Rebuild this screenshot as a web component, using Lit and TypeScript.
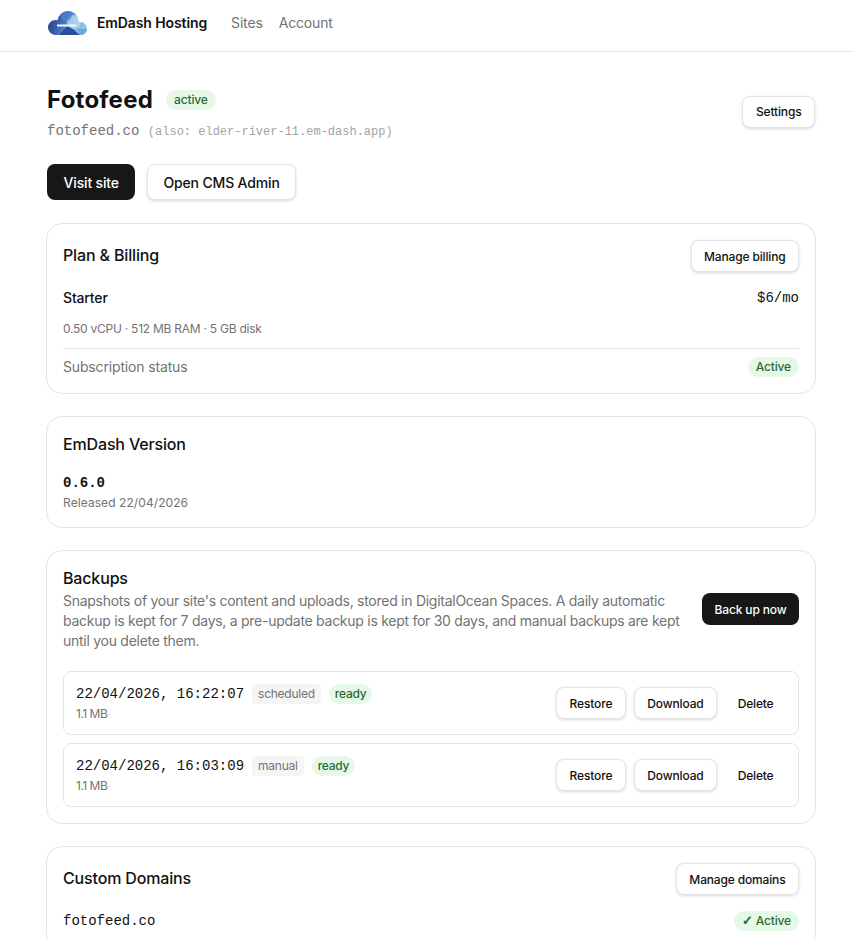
import { LitElement, html, css } from 'lit';
import { customElement } from 'lit/decorators.js';

const backups = [
    { date: '22/04/2026, 16:22:07', kind: 'scheduled' },
    { date: '22/04/2026, 16:03:09', kind: 'manual' },
];

@customElement('app-root')
export class AppRoot extends LitElement {
    static styles = css`
        :host {
            display: block;
            height: 939px;
            overflow: hidden;
            background: #fff;
            color: #111;
            font-family: Inter, 'Liberation Sans', sans-serif;
            font-size: 14px;
            letter-spacing: -0.011em;
        }

        * {
            box-sizing: border-box;
        }

        .mono {
            font-family: 'Liberation Mono', monospace;
            letter-spacing: 0;
        }

        header {
            display: flex;
            align-items: center;
            height: 52px;
            padding: 0 46px 6px 48px;
            border-bottom: 1px solid #e5e5e5;
        }

        .logo {
            width: 40px;
            height: 26px;
            margin-right: 9px;
        }

        .brand {
            font-size: 14px;
            font-weight: 600;
            letter-spacing: -0.008em;
            margin-right: 24px;
        }

        nav {
            display: flex;
            gap: 16px;
            color: #737373;
        }

        main {
            display: flex;
            flex-direction: column;
            width: 770px;
            margin-left: 46px;
            padding-top: 33px;
        }

        .top {
            display: flex;
            justify-content: space-between;
            align-items: center;
            padding: 0 1px;
        }

        .top > button {
            margin-bottom: 2px;
        }

        .title-row {
            display: flex;
            align-items: center;
            gap: 13px;
        }

        h1 {
            margin: 0;
            font-size: 24px;
            line-height: 30px;
            font-weight: 700;
            letter-spacing: 0.01em;
        }

        .domain {
            margin-top: 8px;
            font-size: 14px;
            line-height: 16px;
            color: #737373;
        }

        .domain span {
            font-size: 12px;
            color: #a3a3a3;
        }

        .actions {
            display: flex;
            gap: 12px;
            margin-top: 24px;
            margin-bottom: 23px;
            padding: 0 1px;
        }

        button {
            font: inherit;
            font-size: 12px;
            font-weight: 500;
            letter-spacing: inherit;
            color: #111;
            height: 32px;
            padding: 0 12.5px;
            border: 1px solid #e5e5e5;
            border-radius: 8px;
            background: #fff;
            box-shadow: 0 1px 3px rgba(0, 0, 0, 0.15);
            white-space: nowrap;
        }

        button.dark {
            color: #fff;
            background: #171717;
            border: none;
            box-shadow: none;
        }

        button.big {
            font-size: 14px;
            height: 36px;
            padding: 0 15px;
        }

        button.big.dark {
            padding: 0 16.5px;
        }

        button.ghost {
            border-color: transparent;
            background: transparent;
            box-shadow: none;
            padding: 0 11.5px;
        }

        .card {
            border: 1px solid #e5e5e5;
            border-radius: 16px;
            padding: 16px;
            margin-bottom: 22px;
        }

        .row {
            display: flex;
            justify-content: space-between;
            align-items: center;
        }

        h2 {
            margin: 0;
            font-size: 16px;
            line-height: 22px;
            font-weight: 500;
        }

        .row > h2 {
            margin-bottom: 2px;
        }

        .badge {
            display: inline-block;
            padding: 0 8px;
            height: 20px;
            line-height: 20px;
            border-radius: 10px;
            font-size: 12px;
            font-weight: 500;
            color: #2a6a37;
            background: #e6f9e8;
            white-space: nowrap;
        }

        .badge.compact {
            padding: 0 6px;
            letter-spacing: -0.02em;
        }

        .check {
            font-family: 'DejaVu Sans', sans-serif;
            font-size: 13px;
            line-height: 1;
            font-weight: 700;
            -webkit-text-stroke: 0.6px #2a6a37;
        }

        .tag {
            display: inline-block;
            padding: 0 6px;
            height: 20px;
            line-height: 20px;
            border-radius: 4px;
            font-size: 12px;
            letter-spacing: -0.02em;
            color: #737373;
            background: #f5f5f5;
        }

        .plan {
            margin-top: 15px;
            line-height: 22px;
            font-weight: 500;
        }

        .plan .mono {
            font-weight: 400;
        }

        .small {
            font-size: 12px;
            line-height: 16px;
            color: #737373;
        }

        .specs {
            margin-top: 12px;
            letter-spacing: -0.25px;
        }

        .status {
            margin-top: 11px;
            padding-top: 8px;
            border-top: 1px solid #e5e5e5;
            color: #737373;
            line-height: 20px;
        }

        .version {
            margin-top: 18px;
            font-size: 14px;
            line-height: 20px;
            font-weight: 700;
        }

        .released {
            margin-top: 2px;
            letter-spacing: 0.08px;
        }

        .desc {
            margin-top: 2px;
            font-size: 14px;
            line-height: 20px;
            letter-spacing: -0.27px;
            color: #737373;
            width: 623px;
        }

        .list {
            display: flex;
            flex-direction: column;
            gap: 8px;
            margin-top: 20px;
        }

        .backup {
            display: flex;
            justify-content: space-between;
            align-items: center;
            height: 64px;
            padding: 0 12px;
            border: 1px solid #e5e5e5;
            border-radius: 8px;
        }

        .backup-head {
            display: flex;
            align-items: center;
            gap: 8px;
            margin-bottom: 2px;
        }

        .size {
            letter-spacing: -0.5px;
        }

        .btns {
            display: flex;
            gap: 8px;
        }
    `;

    render() {
        return html`
            <header>
                <svg class="logo" viewBox="0 0 40 26">
                    <defs>
                        <clipPath id="cloud">
                            <circle cx="7.5" cy="17.5" r="7.5" />
                            <circle cx="20" cy="11.5" r="10.5" />
                            <circle cx="32.5" cy="18.5" r="6.5" />
                            <rect x="7" y="15" width="26" height="10" />
                        </clipPath>
                        <linearGradient id="sky" x1="0" y1="0" x2="1" y2="0.3">
                            <stop offset="0" stop-color="#2a2d78" />
                            <stop offset="0.4" stop-color="#3c62b0" />
                            <stop offset="0.7" stop-color="#5f9fd6" />
                            <stop offset="1" stop-color="#8cc4e8" />
                        </linearGradient>
                    </defs>
                    <g clip-path="url(#cloud)">
                        <rect width="40" height="26" fill="url(#sky)" />
                        <path d="M10 26 L20 15 L33 26z" fill="#2c4d9c" />
                        <circle cx="26" cy="12" r="7" fill="#cfe7f4" opacity="0.65" />
                        <circle cx="18" cy="5" r="6" fill="#4d86c8" opacity="0.7" />
                        <rect x="31" y="19" width="9" height="7" fill="#6aa8dc" />
                    </g>
                    <rect x="9" y="14.5" width="19" height="2" fill="#f4f7fb" />
                </svg>
                <span class="brand">EmDash Hosting</span>
                <nav><span>Sites</span><span>Account</span></nav>
            </header>
            <main>
                <div class="top">
                    <div>
                        <div class="title-row">
                            <h1>Fotofeed</h1>
                            <span class="badge">active</span>
                        </div>
                        <div class="domain mono">
                            fotofeed.co
                            <span>(also: elder-river-11.em-dash.app)</span>
                        </div>
                    </div>
                    <button>Settings</button>
                </div>
                <div class="actions">
                    <button class="big dark">Visit site</button>
                    <button class="big">Open CMS Admin</button>
                </div>

                <section class="card">
                    <div class="row">
                        <h2>Plan &amp; Billing</h2>
                        <button>Manage billing</button>
                    </div>
                    <div class="row plan">
                        <span>Starter</span><span class="mono">$6/mo</span>
                    </div>
                    <div class="small specs">0.50 vCPU · 512 MB RAM · 5 GB disk</div>
                    <div class="row status">
                        <span>Subscription status</span>
                        <span class="badge">Active</span>
                    </div>
                </section>

                <section class="card">
                    <h2>EmDash Version</h2>
                    <div class="version mono">0.6.0</div>
                    <div class="small released">Released 22/04/2026</div>
                </section>

                <section class="card">
                    <div class="row">
                        <div>
                            <h2>Backups</h2>
                            <div class="desc">
                                Snapshots of your site's content and uploads, stored in
                                DigitalOcean Spaces. A daily automatic backup is kept for
                                7 days, a pre-update backup is kept for 30 days, and
                                manual backups are kept until you delete them.
                            </div>
                        </div>
                        <button class="dark">Back up now</button>
                    </div>
                    <div class="list">
                        ${backups.map(
                            (b) => html`
                                <div class="backup">
                                    <div>
                                        <div class="backup-head">
                                            <span class="mono">${b.date}</span>
                                            <span class="tag">${b.kind}</span>
                                            <span class="badge compact">ready</span>
                                        </div>
                                        <div class="small size">1.1 MB</div>
                                    </div>
                                    <div class="btns">
                                        <button>Restore</button>
                                        <button>Download</button>
                                        <button class="ghost">Delete</button>
                                    </div>
                                </div>
                            `,
                        )}
                    </div>
                </section>

                <section class="card">
                    <div class="row">
                        <h2>Custom Domains</h2>
                        <button>Manage domains</button>
                    </div>
                    <div class="row plan">
                        <span class="mono">fotofeed.co</span>
                        <span class="badge"><span class="check">✓</span> Active</span>
                    </div>
                </section>
            </main>
        `;
    }
}
